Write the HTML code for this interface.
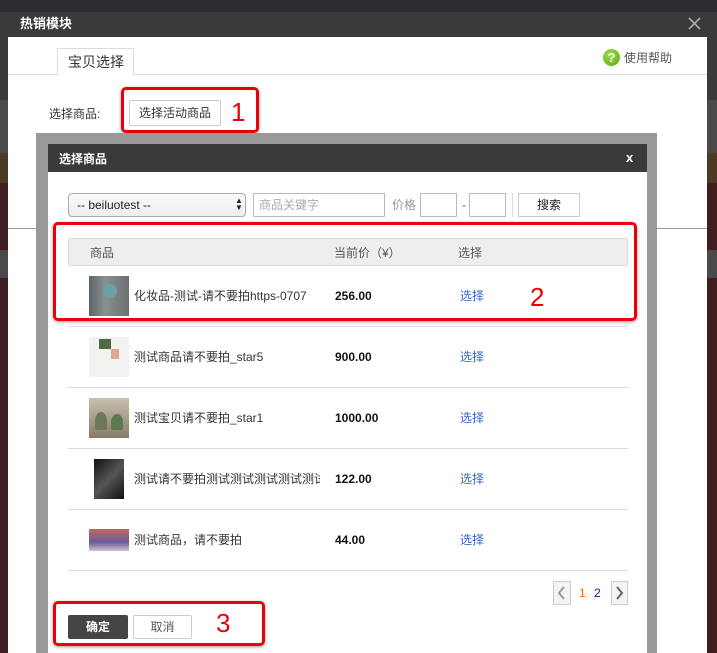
<!DOCTYPE html>
<html><head><meta charset="utf-8"><style>
*{box-sizing:border-box;margin:0;padding:0}
body{width:717px;height:653px;overflow:hidden;position:relative;background:#fff;font-family:"Liberation Sans","Noto Sans CJK SC",sans-serif;font-size:12px;color:#333;line-height:16px}
.a{position:absolute}
.red{position:absolute;border:3px solid #e8000a;border-radius:5px;box-shadow:0 1px 3px rgba(0,0,0,.4)}
.num{position:absolute;color:#e8000a;font-size:26px;line-height:30px;font-family:"Liberation Sans",sans-serif}
.row{position:absolute;left:68px;width:560px;height:61px;border-bottom:1px solid #ddd}
.row .img{position:absolute;left:21px;top:10px;width:40px;height:40px}
.row .t,.row .p,.row .s{position:absolute;top:22px;height:16px;line-height:16px}
.row .t{left:66px;width:186px;white-space:nowrap;overflow:hidden;color:#333}
.row .p{left:267px;font-weight:bold;color:#111}
.row .s{left:392px;color:#3366cc}
</style></head><body>
<div class="a" style="left:0;top:0;width:717px;height:12px;background:#2b2d30"></div>
<div class="a" style="left:0;top:12px;width:8px;height:641px;background:#3a3a3a"></div>
<div class="a" style="left:707px;top:12px;width:10px;height:641px;background:#3a3a3a"></div>
<div class="a" style="left:0;top:100px;width:8px;height:53px;background:#4a4a4a"></div>
<div class="a" style="left:707px;top:100px;width:10px;height:53px;background:#4a4a4a"></div>
<div class="a" style="left:0;top:153px;width:8px;height:30px;background:#4a3b22"></div>
<div class="a" style="left:707px;top:153px;width:10px;height:30px;background:#4a3b22"></div>
<div class="a" style="left:0;top:183px;width:8px;height:67px;background:#3f1d20"></div>
<div class="a" style="left:707px;top:183px;width:10px;height:67px;background:#3f1d20"></div>
<div class="a" style="left:0;top:250px;width:8px;height:28px;background:#4a4a4a"></div>
<div class="a" style="left:707px;top:250px;width:10px;height:28px;background:#4a4a4a"></div>
<div class="a" style="left:0;top:278px;width:8px;height:375px;background:#3f1d20"></div>
<div class="a" style="left:707px;top:278px;width:10px;height:375px;background:#3f1d20"></div>

<div class="a" style="left:8px;top:12px;width:699px;height:641px;background:#fff"></div>
<div class="a" style="left:8px;top:12px;width:699px;height:25px;background:#3a3a3a"></div>
<div class="a" style="left:20px;top:16px;color:#fff;font-weight:bold;font-size:13px">热销模块</div>
<svg class="a" style="left:688px;top:17px" width="13" height="13"><path d="M1 1L12 12M12 1L1 12" stroke="#aaa" stroke-width="1.6"/></svg>
<div class="a" style="left:8px;top:74px;width:699px;height:1px;background:#ddd"></div>
<div class="a" style="left:57px;top:48px;width:77px;height:27px;background:#fff;border:1px solid #ddd;border-bottom:none"></div>
<div class="a" style="left:68px;top:53px;font-size:14px;line-height:18px;color:#333">宝贝选择</div>
<div class="a" style="left:603px;top:49px;width:17px;height:17px;border-radius:50%;background:radial-gradient(circle at 40% 35%,#9de04a,#5aa615);color:#fff;font-weight:bold;font-size:13px;text-align:center;line-height:17px">?</div>
<div class="a" style="left:624px;top:50px;font-size:12px;color:#555">使用帮助</div>
<div class="a" style="left:49px;top:106px;color:#333">选择商品:</div>
<div class="a" style="left:129px;top:100px;width:92px;height:26px;border:1px solid #ccc;border-radius:2px;text-align:center;line-height:24px;color:#333">选择活动商品</div>
<div class="red" style="left:121px;top:87px;width:138px;height:46px"></div>
<div class="num" style="left:231px;top:97px">1</div>
<div class="a" style="left:8px;top:228px;width:699px;height:1px;background:#999"></div>

<div class="a" style="left:36px;top:133px;width:621px;height:520px;background:#999"></div>
<div class="a" style="left:48px;top:144px;width:599px;height:509px;background:#fff"></div>
<div class="a" style="left:48px;top:144px;width:599px;height:28px;background:#3a3a3a"></div>
<div class="a" style="left:59px;top:151px;color:#fff;font-weight:bold;font-size:12px">选择商品</div>
<div class="a" style="left:626px;top:150px;color:#fff;font-weight:bold;font-size:13px">x</div>

<div class="a" style="left:68px;top:193px;width:178px;height:24px;border:1px solid #aaa;border-radius:4px;background:linear-gradient(#fafafa,#eee);padding-left:8px;line-height:22px;color:#222;font-size:12px">-- beiluotest --</div>
<div class="a" style="left:235px;top:197px;font-size:8px;line-height:7px;color:#222">▲<br>▼</div>
<div class="a" style="left:253px;top:193px;width:132px;height:24px;border:1px solid #bbb;padding-left:5px;line-height:22px;color:#aaa">商品关键字</div>
<div class="a" style="left:392px;top:197px;color:#999">价格</div>
<div class="a" style="left:420px;top:193px;width:37px;height:24px;border:1px solid #bbb"></div>
<div class="a" style="left:462px;top:197px;color:#666">-</div>
<div class="a" style="left:469px;top:193px;width:37px;height:24px;border:1px solid #bbb"></div>
<div class="a" style="left:512px;top:193px;width:1px;height:24px;background:#ddd"></div>
<div class="a" style="left:518px;top:193px;width:62px;height:24px;border:1px solid #ccc;text-align:center;line-height:22px;color:#222">搜索</div>

<div class="a" style="left:68px;top:238px;width:560px;height:28px;background:#eee;border:1px solid #ddd"></div>
<div class="a" style="left:90px;top:245px;color:#555">商品</div>
<div class="a" style="left:334px;top:245px;color:#555">当前价（¥）</div>
<div class="a" style="left:458px;top:245px;color:#555">选择</div>

<div class="row" style="top:266px">
<div class="img" style="background:linear-gradient(90deg,#5d6466,#8a9090 40%,#6a7070);"><div style="position:absolute;left:14px;top:8px;width:14px;height:14px;border-radius:50%;background:#6aa0a8"></div></div>
<div class="t">化妆品-测试-请不要拍https-0707</div><div class="p">256.00</div><div class="s">选择</div></div>
<div class="row" style="top:327px">
<div class="img" style="background:#f2f2f0"><div style="position:absolute;left:10px;top:2px;width:12px;height:10px;background:#4a6a40"></div><div style="position:absolute;left:22px;top:12px;width:8px;height:10px;background:#e0a890"></div></div>
<div class="t">测试商品请不要拍_star5</div><div class="p">900.00</div><div class="s">选择</div></div>
<div class="row" style="top:388px">
<div class="img" style="background:linear-gradient(#c8c0b0,#8a7a68)"><div style="position:absolute;left:6px;top:14px;width:12px;height:18px;border-radius:50% 50% 2px 2px;background:#6a7a55"></div><div style="position:absolute;left:22px;top:16px;width:12px;height:16px;border-radius:50% 50% 2px 2px;background:#5a7a50"></div></div>
<div class="t">测试宝贝请不要拍_star1</div><div class="p">1000.00</div><div class="s">选择</div></div>
<div class="row" style="top:449px">
<div class="img" style="left:26px;width:30px;background:linear-gradient(135deg,#111,#555 50%,#111)"></div>
<div class="t">测试请不要拍测试测试测试测试测试</div><div class="p">122.00</div><div class="s">选择</div></div>
<div class="row" style="top:510px">
<div class="img" style="top:19px;height:22px;background:linear-gradient(#c06a60,#6a5a9a 60%,#d8c0d0)"></div>
<div class="t">测试商品，请不要拍</div><div class="p">44.00</div><div class="s">选择</div></div>

<div class="red" style="left:53px;top:222px;width:584px;height:99px"></div>
<div class="num" style="left:530px;top:282px">2</div>

<div class="a" style="left:553px;top:581px;width:18px;height:24px;border:1px solid #ccc;background:#f4f4f4"></div>
<svg class="a" style="left:557px;top:586px" width="10" height="14"><path d="M7 1L2 7L7 13" stroke="#999" stroke-width="2" fill="none"/></svg>
<div class="a" style="left:579px;top:585px;color:#f60">1</div>
<div class="a" style="left:594px;top:585px;color:#330099">2</div>
<div class="a" style="left:611px;top:581px;width:17px;height:24px;border:1px solid #ccc;background:#f4f4f4"></div>
<svg class="a" style="left:614px;top:586px" width="10" height="14"><path d="M3 1L8 7L3 13" stroke="#666" stroke-width="2" fill="none"/></svg>

<div class="a" style="left:68px;top:615px;width:60px;height:24px;background:#444;border-radius:2px;color:#fff;font-weight:bold;text-align:center;line-height:24px">确定</div>
<div class="a" style="left:133px;top:615px;width:59px;height:24px;border:1px solid #ccc;border-radius:2px;color:#555;text-align:center;line-height:22px">取消</div>
<div class="red" style="left:53px;top:601px;width:212px;height:45px"></div>
<div class="num" style="left:216px;top:608px">3</div>
</body></html>
